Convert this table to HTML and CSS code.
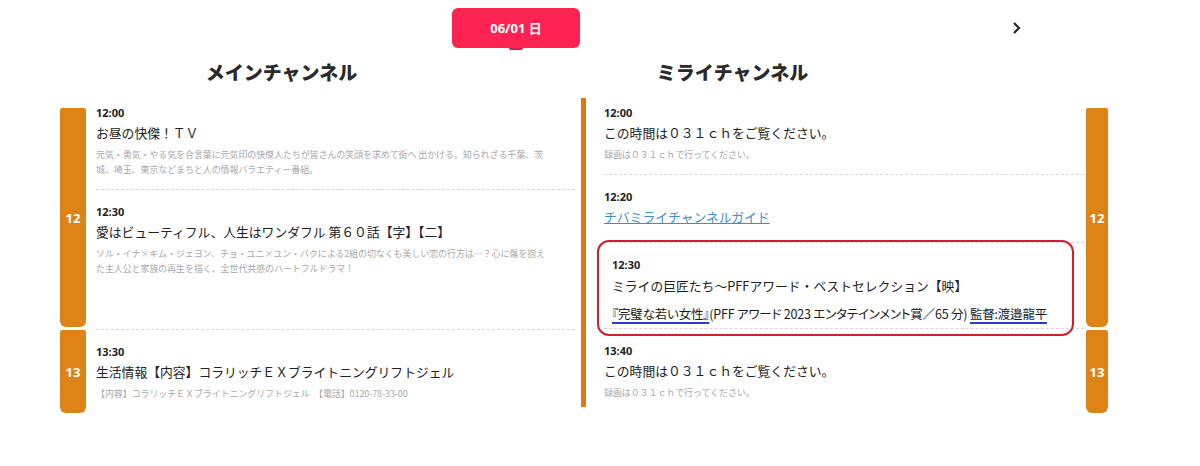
FILE: index.html
```html
<!DOCTYPE html>
<html lang="ja">
<head>
  <meta charset="UTF-8">
  <title>番組表</title>
  <meta name="viewport" content="width=device-width, initial-scale=1.0">
  <link rel="stylesheet" href="styles.css">
</head>
<body>

<div class="date-nav">
  <div class="date-btn">06/01 日</div>
  <a class="next" href="#">
    <svg width="10" height="14" viewBox="0 0 10 14"><polyline points="2,2 7,7 2,12" fill="none" stroke="#222" stroke-width="2.2"/></svg>
  </a>
</div>

<div class="channel-heads">
  <h2>メインチャンネル</h2>
  <h2>ミライチャンネル</h2>
</div>

<div class="schedule">
  <div class="hours hours-left">
    <div class="hour h12">12</div>
    <div class="hour h13">13</div>
  </div>

  <div class="list list-left">
    <div class="item">
      <div class="time">12:00</div>
      <div class="title">お昼の快傑！ＴＶ</div>
      <p class="desc">元気・勇気・やる気を合言葉に元気印の快傑人たちが皆さんの笑顔を求めて街へ 出かける。知られざる千葉、茨城、埼玉、東京などまちと人の情報バラエティー番組。</p>
    </div>
    <div class="item long">
      <div class="time">12:30</div>
      <div class="title">愛はビューティフル、人生はワンダフル 第６０話【字】【二】</div>
      <p class="desc">ソル・イナ×キム・ジェヨン、チョ・ユニ×ユン・バクによる2組の切なくも美しい恋の行方は…？心に傷を抱えた主人公と家族の再生を描く、全世代共感のハートフルドラマ！</p>
    </div>
    <div class="item">
      <div class="time">13:30</div>
      <div class="title">生活情報【内容】コラリッチＥＸブライトニングリフトジェル</div>
      <p class="desc">【内容】コラリッチＥＸブライトニングリフトジェル　【電話】0120-78-33-00</p>
    </div>
  </div>

  <div class="divider"></div>

  <div class="list list-right">
    <div class="item">
      <div class="time">12:00</div>
      <div class="title">この時間は０３１ｃｈをご覧ください。</div>
      <p class="desc">録画は０３１ｃｈで行ってください。</p>
    </div>
    <div class="item short">
      <div class="time">12:20</div>
      <div class="title"><a href="#">チバミライチャンネルガイド</a></div>
    </div>
    <div class="item picked">
      <div class="time">12:30</div>
      <div class="title">ミライの巨匠たち～PFFアワード・ベストセレクション【映】</div>
      <p class="note"><u>『完璧な若い女性』</u>(PFF アワード 2023 エンタテインメント賞／65 分) <u>監督:渡邉龍平</u></p>
      <div class="mark"></div>
    </div>
    <div class="item">
      <div class="time">13:40</div>
      <div class="title">この時間は０３１ｃｈをご覧ください。</div>
      <p class="desc">録画は０３１ｃｈで行ってください。</p>
    </div>
  </div>

  <div class="hours hours-right">
    <div class="hour h12">12</div>
    <div class="hour h13">13</div>
  </div>
</div>

</body>
</html>
```

FILE: styles.css
```css
* {
  box-sizing: border-box;
}
body {
  margin: 0;
  background: #fff;
  color: #222;
  font-family: "Noto Sans", "Noto Sans CJK JP", sans-serif;
}
.date-nav {
  display: flex;
  align-items: center;
  padding-top: 8px;
}
.date-btn {
  position: relative;
  margin-left: 452px;
  width: 128px;
  height: 40px;
  line-height: 40px;
  text-align: center;
  background: #ff2352;
  color: #fff;
  font-size: 13px;
  font-weight: bold;
  border-radius: 6px;
}
.date-btn::after {
  content: "";
  position: absolute;
  left: 57px;
  bottom: -2px;
  width: 14px;
  height: 2px;
  border-radius: 0 0 4px 4px;
  background: #d61d45;
}
.next {
  margin-left: 432px;
  display: flex;
}
.channel-heads {
  display: flex;
  padding-left: 56px;
  margin-top: 13px;
}
.channel-heads h2 {
  width: 451px;
  margin: 0;
  text-align: center;
  font-size: 19px;
  line-height: 24px;
  font-weight: 900;
  color: #2a2a2a;
}
.schedule {
  display: flex;
  align-items: flex-start;
  padding-left: 60px;
  margin-top: 6px;
}
.hours {
  display: flex;
  flex-direction: column;
  gap: 3px;
  margin-top: 17px;
}
.hours-left {
  width: 26px;
}
.hours-right {
  width: 22px;
  margin-left: 2px;
}
.hour {
  display: flex;
  align-items: center;
  justify-content: center;
  background: #de8417;
  color: #fff;
  font-size: 13px;
  font-weight: bold;
  border-radius: 2px 2px 6px 6px;
}
.h12 {
  height: 219px;
}
.h13 {
  height: 83px;
}
.list-left {
  width: 479px;
  margin-left: 10px;
}
.list-right {
  width: 480px;
  margin-left: 18px;
}
.divider {
  width: 5px;
  height: 309px;
  margin-left: 6px;
  margin-top: 7px;
  background: #d97c12;
}
.item {
  position: relative;
  padding: 14px 26px 12px 0;
  border-bottom: 1px dashed #d6d6d6;
}
.item:last-child {
  border-bottom: none;
}
.item.long {
  height: 140px;
}
.item.short {
  padding-bottom: 15px;
}
.time {
  font-size: 11px;
  font-weight: bold;
  line-height: 16px;
}
.title {
  margin-top: 2px;
  font-size: 12.8px;
  line-height: 20px;
  font-family: "Noto Sans CJK JP", sans-serif;
}
.title a {
  color: #3a8fd6;
}
.desc {
  margin: 4px 0 0;
  font-size: 9px;
  line-height: 15px;
  letter-spacing: -0.1px;
  color: #a9a9a9;
  font-family: "Noto Sans CJK JP", sans-serif;
}
.item.picked {
  padding: 14px 10px 4px 8px;
}
.item.picked .title {
  margin-top: 3px;
}
.note {
  margin: 8px 0 0;
  font-size: 12.5px;
  line-height: 20px;
  letter-spacing: -0.2px;
  color: #1a1a1a;
  font-feature-settings: "palt";
  font-family: "Noto Sans CJK JP", sans-serif;
}
.note u {
  text-decoration-color: #2b3bcc;
  text-decoration-thickness: 1.5px;
  text-underline-offset: 3px;
}
.mark {
  position: absolute;
  top: -3px;
  bottom: -8px;
  left: -7px;
  right: 10px;
  border: 2.5px solid #d21f2e;
  border-radius: 12px;
}
```
